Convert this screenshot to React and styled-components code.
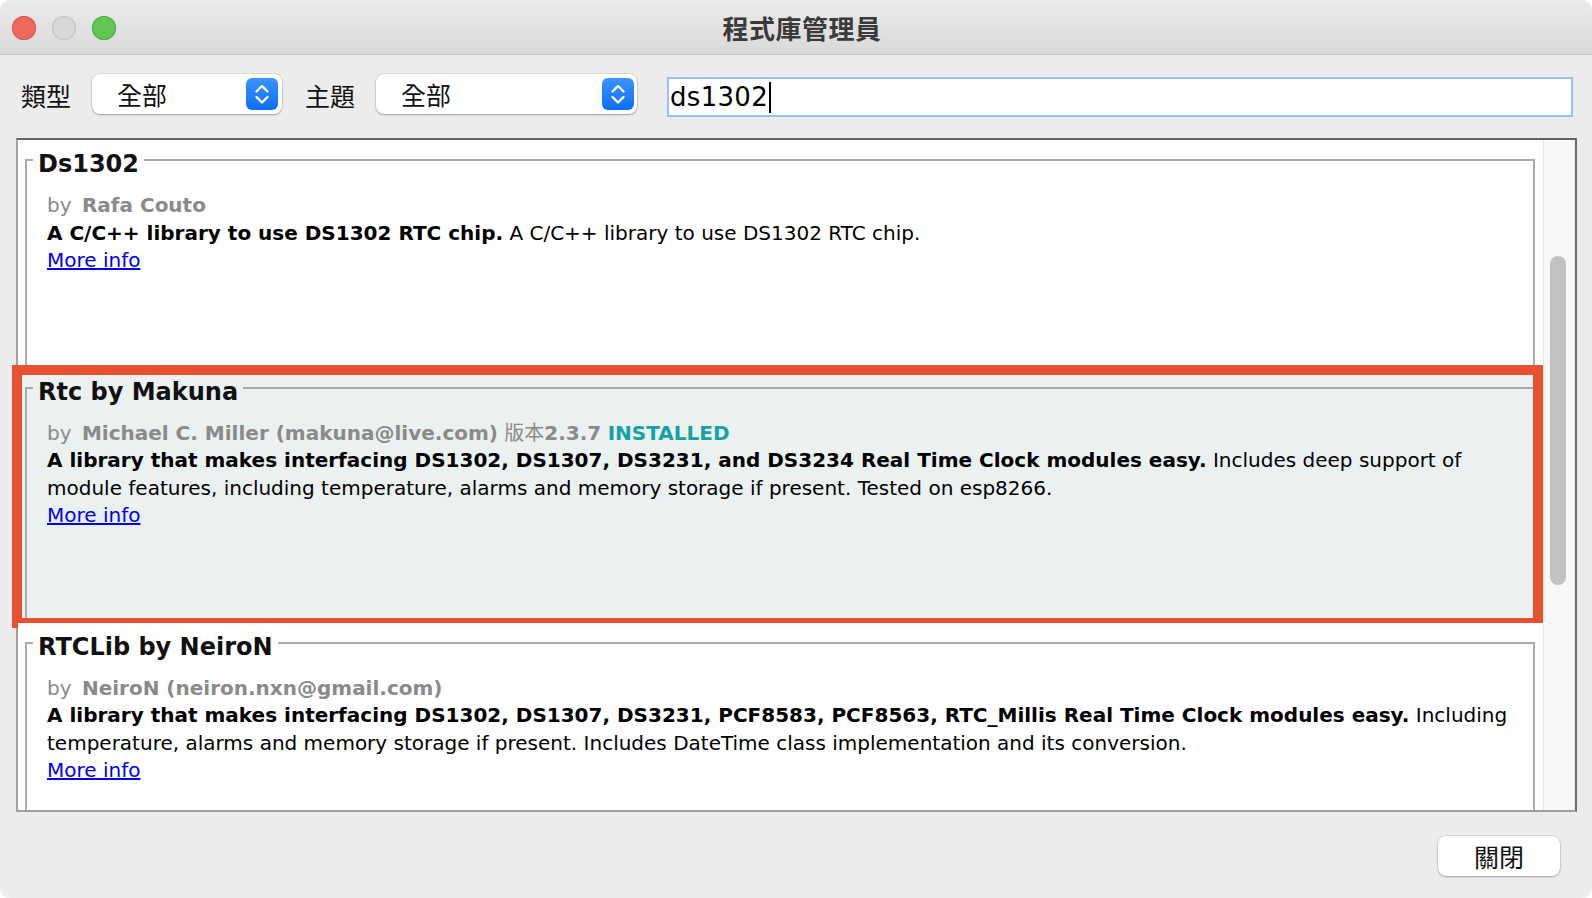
import React from 'react';
import styled, { createGlobalStyle } from 'styled-components';

const GlobalStyle = createGlobalStyle`
  html, body {
    margin: 0;
    padding: 0;
    background: #ffffff;
  }
  body {
    font-family: "DejaVu Sans", Verdana, sans-serif;
  }
`;

const CJK = '"Noto Sans CJK TC", "Noto Sans CJK SC", sans-serif';

const libraries = [
  {
    name: 'Ds1302',
    author: 'Rafa Couto',
    summary: 'A C/C++ library to use DS1302 RTC chip.',
    text: 'A C/C++ library to use DS1302 RTC chip.',
  },
  {
    name: 'Rtc by Makuna',
    author: 'Michael C. Miller (makuna@live.com)',
    version: '2.3.7',
    installed: true,
    summary:
      'A library that makes interfacing DS1302, DS1307, DS3231, and DS3234 Real Time Clock modules easy.',
    text:
      'Includes deep support of module features, including temperature, alarms and memory storage if present. Tested on esp8266.',
    highlight: true,
  },
  {
    name: 'RTCLib by NeiroN',
    author: 'NeiroN (neiron.nxn@gmail.com)',
    summary:
      'A library that makes interfacing DS1302, DS1307, DS3231, PCF8583, PCF8563, RTC_Millis Real Time Clock modules easy.',
    text:
      'Including temperature, alarms and memory storage if present. Includes DateTime class implementation and its conversion.',
  },
];

function Stepper() {
  return (
    <StepperBox>
      <svg width="32" height="32" viewBox="0 0 32 32" fill="none">
        <path
          d="M10.5 13.5 L16 8 L21.5 13.5"
          stroke="#fff"
          strokeWidth="2.4"
          strokeLinecap="round"
          strokeLinejoin="round"
        />
        <path
          d="M10.5 19 L16 24.5 L21.5 19"
          stroke="#fff"
          strokeWidth="2.4"
          strokeLinecap="round"
          strokeLinejoin="round"
        />
      </svg>
    </StepperBox>
  );
}

function LibraryItem({ lib }) {
  return (
    <ItemPanel $bg={lib.highlight ? '#ebf0f0' : '#ffffff'}>
      <Frame>
        <Legend>{lib.name}</Legend>
        <Body>
          <ByLine>
            by
            {' '}
            <Author>{lib.author}</Author>
            {lib.version && (
              <>
                {' '}
                <Cjk>版本</Cjk>
                <Author $tight>{lib.version}</Author>
              </>
            )}
            {lib.installed && (
              <>
                {' '}
                <Installed>INSTALLED</Installed>
              </>
            )}
          </ByLine>
          <Desc>
            <b>{lib.summary}</b>
            {' '}
            {lib.text}
          </Desc>
          <MoreLink href="#more">More info</MoreLink>
        </Body>
      </Frame>
      {lib.highlight && <Highlight />}
    </ItemPanel>
  );
}

export default function App() {
  return (
    <>
      <GlobalStyle />
      <Window>
        <TitleBar>
          <Lights>
            <Light $color="#ee6a5f" $edge="#d5574c" />
            <Light $color="#d8d8d8" $edge="#c3c3c3" />
            <Light $color="#62c655" $edge="#51a843" />
          </Lights>
          <Title>程式庫管理員</Title>
          <span />
        </TitleBar>

        <Toolbar>
          <Label>類型</Label>
          <Select $w={190} $pr={4}>
            <SelectText>全部</SelectText>
            <Stepper />
          </Select>
          <Label $gap>主題</Label>
          <Select $w={261} $pr={3}>
            <SelectText>全部</SelectText>
            <Stepper />
          </Select>
          <Search>
            <SearchText>ds1302</SearchText>
            <Caret />
          </Search>
        </Toolbar>

        <List>
          <Items>
            {libraries.map((lib) => (
              <LibraryItem key={lib.name} lib={lib} />
            ))}
          </Items>
          <Track>
            <Thumb />
          </Track>
        </List>

        <Footer>
          <CloseBtn type="button">關閉</CloseBtn>
        </Footer>
      </Window>
    </>
  );
}

const Window = styled.div`
  width: 1592px;
  height: 898px;
  border-radius: 10px;
  overflow: hidden;
  background: #ececec;
  display: flex;
  flex-direction: column;
`;

const TitleBar = styled.div`
  height: 55px;
  box-sizing: border-box;
  border-bottom: 1px solid #c4c4c4;
  background: linear-gradient(#ebebeb, #d9d9d9);
  display: grid;
  grid-template-columns: 1fr auto 1fr;
  align-items: center;
  padding-left: 12px;
`;

const Lights = styled.div`
  display: flex;
  gap: 16px;
  padding-top: 2px;
`;

const Light = styled.span`
  width: 24px;
  height: 24px;
  border-radius: 50%;
  background: ${(p) => p.$color};
  box-shadow: inset 0 0 0 1px ${(p) => p.$edge};
`;

const Title = styled.div`
  font-family: ${CJK};
  font-weight: 700;
  font-size: 26px;
  color: #3a3a3a;
  letter-spacing: 0.5px;
`;

const Toolbar = styled.div`
  height: 83px;
  box-sizing: border-box;
  padding: 19px 19px 0 21px;
  display: flex;
  align-items: flex-start;
`;

const Label = styled.div`
  font-family: ${CJK};
  font-size: 25px;
  line-height: 42px;
  color: #111;
  margin: 0 21px 0 ${(p) => (p.$gap ? '23px' : '0')};
`;

const Select = styled.div`
  width: ${(p) => p.$w}px;
  height: 40px;
  box-sizing: border-box;
  background: #fff;
  border-radius: 8px;
  box-shadow: 0 0 0 0.5px rgba(0, 0, 0, 0.14), 0 1px 2px rgba(0, 0, 0, 0.28);
  display: flex;
  align-items: center;
  justify-content: space-between;
  padding: 0 ${(p) => p.$pr}px 0 25px;
`;

const SelectText = styled.span`
  font-family: ${CJK};
  font-size: 25px;
  color: #111;
`;

const StepperBox = styled.span`
  width: 32px;
  height: 32px;
  border-radius: 6px;
  background: linear-gradient(#3b95fd, #0c6ff4);
  display: flex;

  svg {
    display: block;
  }
`;

const Search = styled.div`
  flex: 1;
  margin: 3px 0 0 30px;
  height: 40px;
  box-sizing: border-box;
  border: 2px solid #97c3f2;
  background: #fff;
  display: flex;
  align-items: center;
  padding-left: 1px;
  font-size: 26px;
  color: #000;
`;

const SearchText = styled.span`
  word-spacing: 0;
  letter-spacing: 0.3px;
`;

const Caret = styled.span`
  width: 2px;
  height: 31px;
  background: #000;
  margin-left: 1px;
`;

const List = styled.div`
  margin: 0 15px 0 16px;
  height: 674px;
  box-sizing: border-box;
  border: 2px solid #a0a0a0;
  border-top-color: #626262;
  border-right-color: #6c6c6c;
  background: #fff;
  display: flex;
  overflow-x: visible;
  overflow-y: clip;
`;

const Items = styled.div`
  flex: 1;
  min-width: 0;
  display: flex;
  flex-direction: column;
`;

const Track = styled.div`
  width: 32px;
  flex-shrink: 0;
  box-sizing: border-box;
  background: #f8f8f8;
  border-left: 1px solid #e6e6e6;
  border-right: 1px solid #e8e8e8;
  padding: 116px 0 0 6px;
`;

const Thumb = styled.div`
  width: 16px;
  height: 329px;
  border-radius: 8px;
  background: #c2c2c2;
`;

const ItemPanel = styled.div`
  position: relative;
  flex-shrink: 0;
  padding: 2px 8px 1px 7px;
  background: ${(p) => p.$bg};
`;

const Frame = styled.fieldset`
  margin: 0;
  min-width: 0;
  border: 2px solid #aaaaaa;
  padding: 0 6px 90px;
`;

const Legend = styled.legend`
  padding: 8px 5px 0;
  font-weight: 700;
  font-size: 24px;
  line-height: 28px;
  color: #111;
`;

const Body = styled.div`
  padding: 14px 8px 0 14px;
  font-size: 20px;
  line-height: 27.5px;
  color: #000;
`;

const ByLine = styled.div`
  color: #8a8a8a;
`;

const Author = styled.b`
  margin-left: ${(p) => (p.$tight ? '0' : '4px')};
`;

const Cjk = styled.span`
  font-family: "DejaVu Sans", ${CJK};
`;

const Installed = styled.b`
  color: #16a2a4;
`;

const Desc = styled.div`
  b {
    font-weight: 700;
  }
`;

const MoreLink = styled.a`
  color: #0000ee;
  text-decoration: underline;
`;

const Highlight = styled.div`
  position: absolute;
  top: -3px;
  left: -6px;
  right: 0;
  bottom: -5px;
  border: 10px solid #e8512f;
  pointer-events: none;
`;

const Footer = styled.div`
  flex: 1;
  display: flex;
  justify-content: flex-end;
  align-items: flex-start;
  padding: 24px 32px 0 0;
`;

const CloseBtn = styled.button`
  width: 122px;
  height: 40px;
  border: none;
  border-radius: 8px;
  background: #fff;
  box-shadow: 0 0 0 0.5px rgba(0, 0, 0, 0.14), 0 1px 2px rgba(0, 0, 0, 0.28);
  font-family: ${CJK};
  font-size: 25px;
  color: #111;
  padding: 0;
`;
